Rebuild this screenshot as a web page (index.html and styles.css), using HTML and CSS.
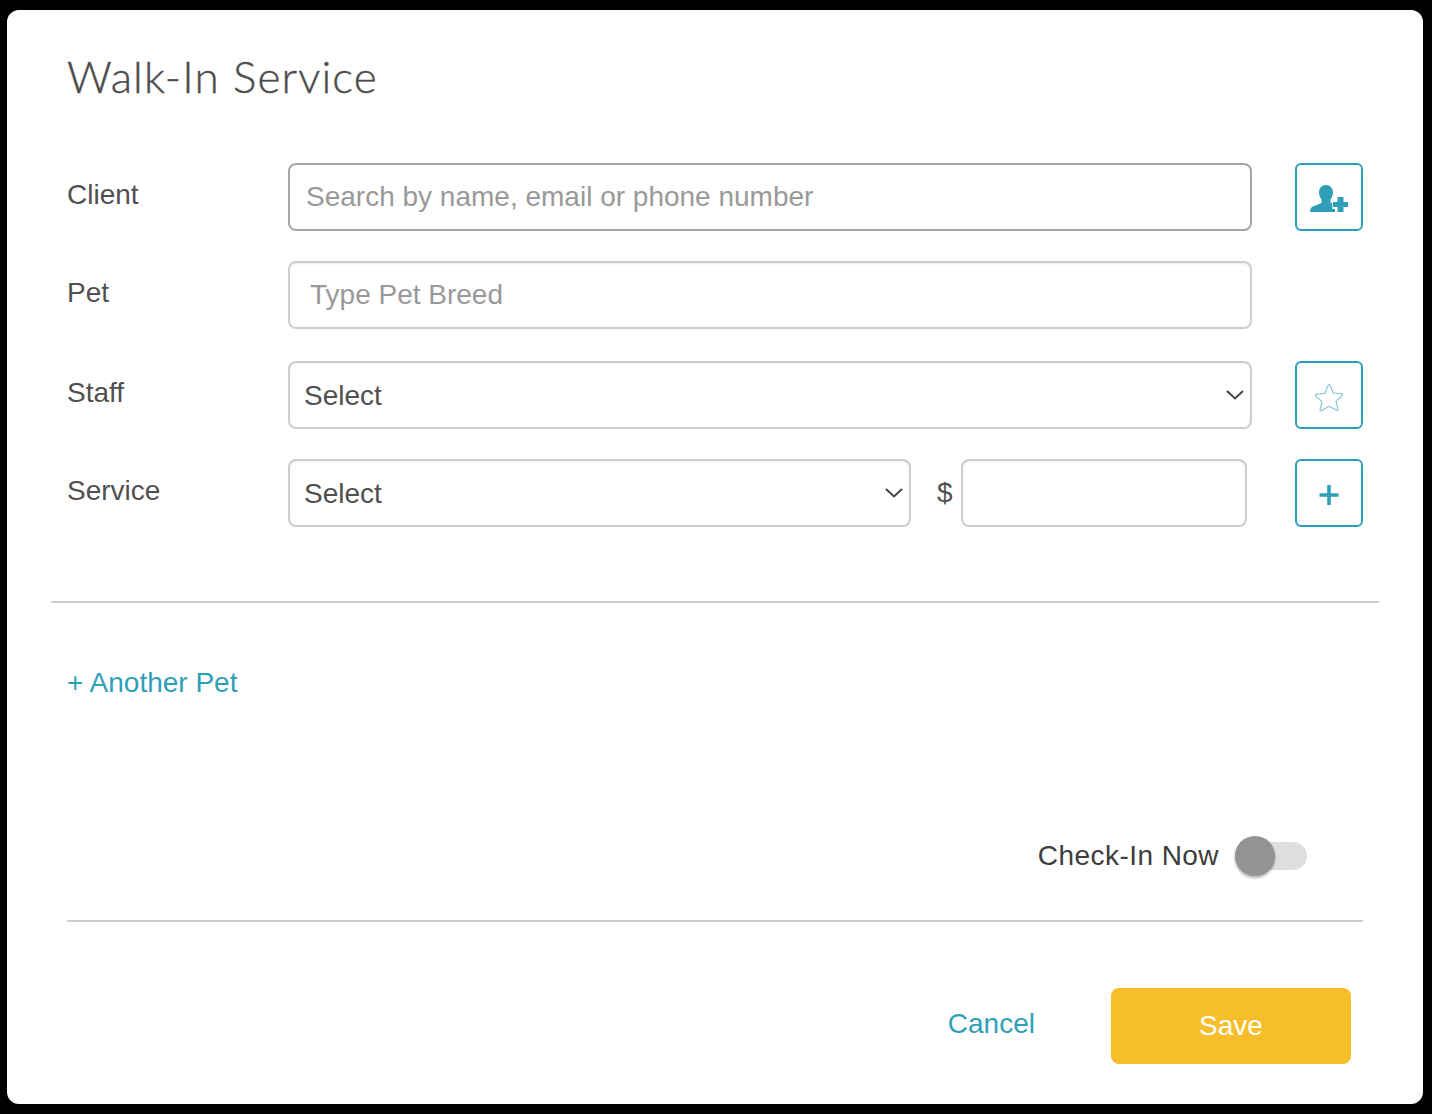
FILE: index.html
```html
<!DOCTYPE html>
<html lang="en">

<head>
    <meta charset="UTF-8">
    <meta name="viewport" content="width=device-width, initial-scale=1.0">
    <title>Walk-In Service</title>
    <link rel="stylesheet" href="styles.css">
</head>

<body>
    <div class="modal">
        <h1 class="title">Walk-In Service</h1>

        <div class="form">
            <div class="row row-client">
                <label class="label">Client</label>
                <input class="input input-dark field" type="text" placeholder="Search by name, email or phone number">
                <button class="icon-btn">
                    <svg width="40" height="30" viewBox="0 0 40 30">
                        <path fill="#2f9fb8" d="M17 3c4 0 7 3 7 7.500 0 2.800-1 5.200-2.500 7v3.200l1.800.5v5.800H26V30H1c0-3 1-4.500 3-5.500 2-1 5.200-2 8.500-3.500v-3.500C11 15.500 10 13 10 10.500 10 6 13 3 17 3z"/>
                        <path fill="#2f9fb8" d="M28.500 15h6v5H39v5h-4.500v5h-6v-5H24v-5h4.500z"/>
                    </svg>
                </button>
            </div>

            <div class="row row-pet">
                <label class="label">Pet</label>
                <input class="input field input-pet" type="text" placeholder="Type Pet Breed">
            </div>

            <div class="row row-staff">
                <label class="label">Staff</label>
                <div class="select field">
                    <span>Select</span>
                    <svg class="chevron" width="18" height="10" viewBox="0 0 18 10">
                        <path d="M1 1l8 7.500L17 1" fill="none" stroke="#444" stroke-width="2"/>
                    </svg>
                </div>
                <button class="icon-btn">
                    <svg class="star" width="30" height="30" viewBox="0 0 30 30">
                        <path d="M15 1.500c.7 0 1 .5 1.300 1.200l3 7.300 8.300.8c1.300.2 1.500 1 .6 1.900l-6.200 5.500 1.900 7.700c.3 1.200-.4 1.700-1.500 1.100L15 23.300l-7.400 4.200c-1.100.6-1.800.1-1.500-1.100L8 18.700l-6.200-5.500c-.9-.9-.7-1.700.6-1.900l8.300-.8 3-7.300c.3-.7.600-1.200 1.300-1.200z" fill="none" stroke="#7fc0d0" stroke-width="1.100"/>
                    </svg>
                </button>
            </div>

            <div class="row row-service">
                <label class="label">Service</label>
                <div class="select select-service">
                    <span>Select</span>
                    <svg class="chevron" width="18" height="10" viewBox="0 0 18 10">
                        <path d="M1 1l8 7.500L17 1" fill="none" stroke="#444" stroke-width="2"/>
                    </svg>
                </div>
                <span class="dollar">$</span>
                <input class="input input-price" type="text">
                <button class="icon-btn btn-plus">
                    <svg class="plus" width="20" height="22" viewBox="0 0 20 22">
                        <path d="M10 1v20M.500 11h19" fill="none" stroke="#2f9fb8" stroke-width="3.600"/>
                    </svg>
                </button>
            </div>
        </div>

        <hr class="line line-wide">

        <a class="add-pet">+ Another Pet</a>

        <div class="checkin">
            <span class="checkin-text">Check-In Now</span>
            <div class="toggle">
                <div class="knob"></div>
            </div>
        </div>

        <hr class="line line-bottom">

        <div class="actions">
            <a class="cancel">Cancel</a>
            <button class="save">Save</button>
        </div>
    </div>
</body>

</html>
```

FILE: styles.css
```css
* {
    margin: 0;
    padding: 0;
    box-sizing: border-box;
}

body {
    background-color: #000;
    padding: 10px 9px 10px 7px;
    font: 28px "Liberation Sans", Arial, sans-serif;
    color: #505050;
}

.modal {
    height: 1094px;
    background-color: #fff;
    border-radius: 12px;
    padding: 41px 60px 0;
}

.title {
    font: 300 44px/50px Lato, sans-serif;
    letter-spacing: 1.14px;
    color: #4d4d4d;
    -webkit-text-stroke: .4px #4d4d4d;
}

.form {
    margin-top: 62px;
}

.row {
    display: flex;
    align-items: flex-start;
    height: 68px;
}

.row-pet {
    margin-top: 30px;
}

.row-staff {
    margin-top: 32px;
}

.row-service {
    margin-top: 30px;
}

.label {
    width: 221px;
    line-height: 64px;
}

.field {
    width: 964px;
}

.input {
    height: 68px;
    border: 2px solid #cdcdcd;
    border-radius: 8px;
    padding: 0 16px;
    font: 28px "Liberation Sans", Arial, sans-serif;
    color: #505050;
    outline: none;
    box-shadow: inset 0 1px 2px rgba(0, 0, 0, .08);
}

.input::placeholder {
    color: #999;
    opacity: 1;
}

.input-dark {
    border-color: #a6a6a6;
    box-shadow: none;
}

.input-pet {
    padding-left: 20px;
}

.select {
    position: relative;
    height: 68px;
    border: 2px solid #cdcdcd;
    border-radius: 8px;
    padding-left: 14px;
    line-height: 65px;
    box-shadow: inset 0 1px 2px rgba(0, 0, 0, .08);
}

.select-service {
    width: 623px;
}

.chevron {
    position: absolute;
    right: 6px;
    top: 27px;
}

.dollar {
    width: 50px;
    padding-left: 26px;
    line-height: 68px;
}

.input-price {
    width: 286px;
}

.icon-btn {
    display: flex;
    align-items: center;
    justify-content: center;
    width: 68px;
    height: 68px;
    margin-left: 43px;
    background-color: #fff;
    border: 2px solid #2f9fb8;
    border-radius: 6px;
}

.btn-plus {
    margin-left: 48px;
}

.star {
    margin-top: 5px;
}

.plus {
    margin-top: 4px;
}

.line {
    border: 0;
    height: 2px;
    background-color: #cdcdcd;
}

.line-wide {
    margin: 74px -16px 0;
}

.line-bottom {
    margin-top: 44px;
}

.add-pet {
    display: block;
    margin-top: 60px;
    line-height: 40px;
    color: #2f9fb8;
}

.checkin {
    display: flex;
    align-items: center;
    justify-content: flex-end;
    height: 40px;
    margin-top: 133px;
    padding-right: 56px;
}

.checkin-text {
    margin-right: 16px;
    letter-spacing: .45px;
    color: #3d3d3d;
}

.toggle {
    position: relative;
    width: 72px;
    height: 28px;
    background-color: #dfdfdf;
    border-radius: 14px;
}

.knob {
    position: absolute;
    left: 0;
    top: -6px;
    width: 40px;
    height: 40px;
    background-color: #939393;
    border-radius: 50%;
    box-shadow: 0 2px 3px rgba(0, 0, 0, .3);
}

.actions {
    display: flex;
    align-items: flex-start;
    justify-content: flex-end;
    margin-top: 66px;
    padding-right: 12px;
}

.cancel {
    margin-right: 76px;
    line-height: 72px;
    color: #2f9fb8;
}

.save {
    width: 240px;
    height: 76px;
    background-color: #f7be2b;
    border: 0;
    border-radius: 8px;
    font: 28px "Liberation Sans", Arial, sans-serif;
    color: #fff;
}
```
